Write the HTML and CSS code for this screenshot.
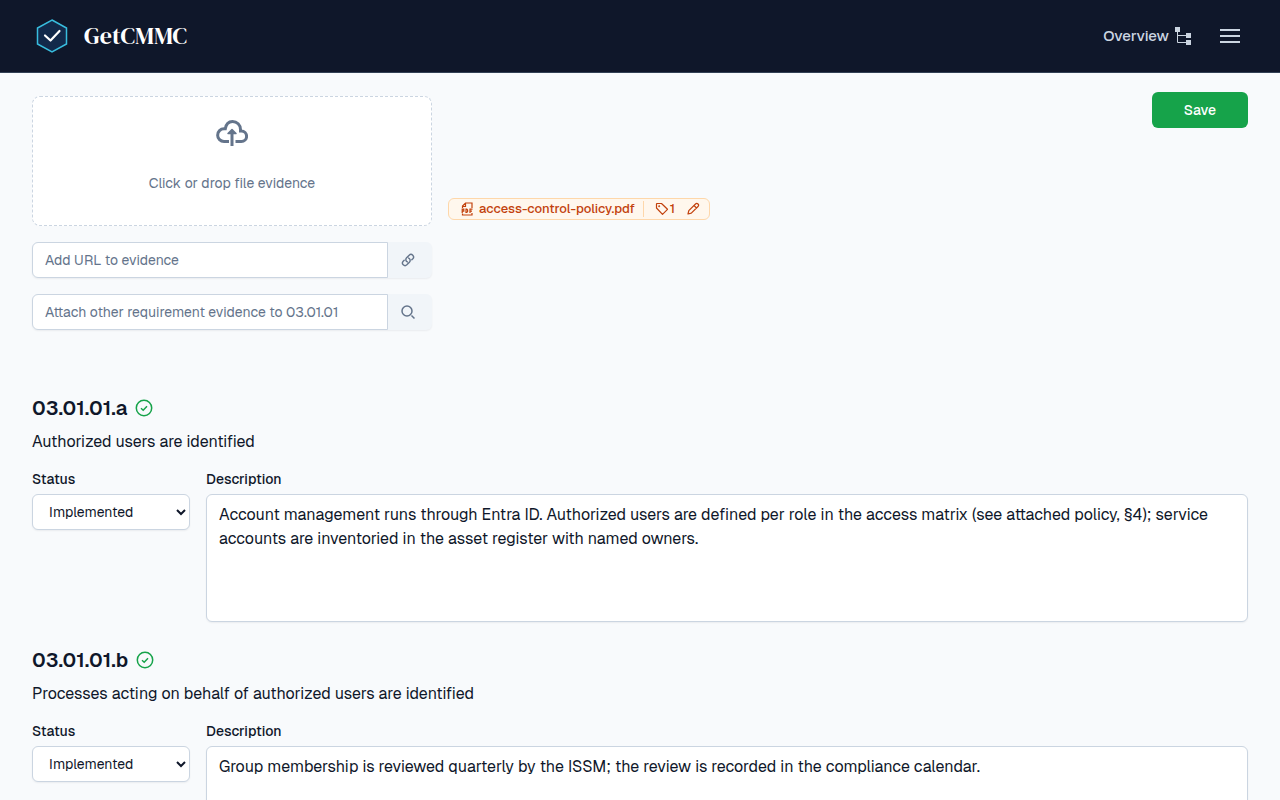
FILE: index.html
```html
<!DOCTYPE html>
<html lang="en">
<head>
    <meta charset="UTF-8">
    <meta name="viewport" content="width=device-width, initial-scale=1.0">
    <title>03.01.01 - GetCMMC</title>
    <link rel="stylesheet" href="styles.css">
</head>
<body>
    <header class="site-header">
        <a href="#" class="brand">
            <svg class="brand-logo" viewBox="0 0 40 40" fill="none">
                <path d="M20 4 34.500 12v16L20 36 5.500 28V12Z" fill="#12294a" stroke="#38bdde" stroke-width="1.500"/>
                <path d="m13 19.500 5.500 5 9-9.500" stroke="#fff" stroke-width="2.200" stroke-linecap="round" stroke-linejoin="round"/>
            </svg>
            <span class="brand-name">GetCMMC</span>
        </a>
        <nav class="site-nav">
            <a href="#" class="overview-link">
                Overview
                <svg width="18" height="20" viewBox="0 0 18 20" fill="none">
                    <path d="M1 1h5v5H1zM12 7h5v5h-5zM12 14h5v5h-5z" fill="currentColor"/>
                    <path d="M3.500 6v10.500H12M3.500 9.500H12" stroke="currentColor"/>
                </svg>
            </a>
            <button type="button" class="menu-btn" aria-label="Menu">
                <svg width="20" height="14" viewBox="0 0 20 14"><path d="M0 0h20v2H0zM0 6h20v2H0zM0 12h20v2H0z" fill="currentColor"/></svg>
            </button>
        </nav>
    </header>

    <main>
        <form>
            <div class="top-row">
                <div class="evidence">
                    <div class="evidence-inputs">
                        <button type="button" class="dropzone">
                            <svg width="32" height="28" viewBox="0 0 32 28" fill="none" stroke="currentColor" stroke-width="3">
                                <path d="M13 22.500H8a6.300 6.300 0 0 1 0-12.700h1.300C10 5.500 12.500 2.500 16.500 2.500c4.500 0 8 3.500 8 8v1.400h.8a5.200 5.200 0 0 1 0 10.600H19.500"/>
                                <path d="M16 27V12"/>
                                <path d="M12 14.500 16 10.500l4 4Z" fill="currentColor" stroke-width="1.500" stroke-linejoin="round"/>
                            </svg>
                            <span>Click or drop file evidence</span>
                        </button>
                        <div class="input-group">
                            <input type="text" placeholder="Add URL to evidence" aria-label="Add URL to evidence">
                            <button type="button" aria-label="Add URL">
                                <svg width="16" height="16" viewBox="-2 -2 28 28" fill="none" stroke="currentColor" stroke-width="2.500" stroke-linecap="round" stroke-linejoin="round">
                                    <path d="M13.190 8.690a4.500 4.500 0 0 1 1.240 7.240l-4.500 4.500a4.500 4.500 0 0 1-6.360-6.360l1.750-1.760m13.360-.62 1.750-1.760a4.500 4.500 0 0 0-6.360-6.360l-4.500 4.500a4.500 4.500 0 0 0 1.240 7.240"/>
                                </svg>
                            </button>
                        </div>
                        <div class="input-group">
                            <input type="text" placeholder="Attach other requirement evidence to 03.01.01" aria-label="Attach other requirement evidence to 03.01.01">
                            <button type="button" aria-label="Search">
                                <svg width="16" height="16" viewBox="0 0 16 16" fill="none" stroke="currentColor" stroke-width="1.500">
                                    <circle cx="7" cy="7" r="5"/>
                                    <path d="m11.500 11.500 3 3"/>
                                </svg>
                            </button>
                        </div>
                    </div>
                    <div class="file-chip">
                        <a href="#" class="file-link">
                            <svg width="14" height="14" viewBox="0 0 14 14" fill="none" stroke="currentColor" stroke-width="1.200">
                                <path d="M2.500 6V4l3-3h6.500v5M2.500 4.500h3V1M2.500 11.500V13H12v-2"/>
                                <path d="M2.200 11V7.200h1.600v2H2.200M6 7.200v3.200h.8l.8-.8V8l-.8-.8ZM10 11V7.200h2.500M10 9.200h2"/>
                            </svg>
                            access-control-policy.pdf
                        </a>
                        <button type="button" class="chip-btn">
                            <svg width="14" height="14" viewBox="0 0 14 14" fill="none" stroke="currentColor" stroke-width="1.200" stroke-linejoin="round">
                                <path d="M1.500 2v4l6 6.300 5-5-6-5.800H2Z"/>
                                <circle cx="4.200" cy="4.200" r=".4"/>
                            </svg>
                            1
                        </button>
                        <button type="button" class="chip-btn" aria-label="Edit">
                            <svg width="14" height="14" viewBox="0 0 14 14" fill="none" stroke="currentColor" stroke-width="1.200" stroke-linejoin="round">
                                <path d="m2 12 .8-3.300L9.500 2a1.750 1.750 0 0 1 2.500 2.500l-6.700 6.700ZM8 3.500 10.500 6"/>
                            </svg>
                        </button>
                    </div>
                </div>
                <button type="submit" class="save-btn">Save</button>
            </div>

            <section class="objective">
                <h2>03.01.01.a
                    <svg width="18" height="18" viewBox="0 0 18 18" fill="none" stroke="currentColor" stroke-width="1.500"><circle cx="9" cy="9" r="7.700"/><path d="m6 9.200 2.200 2L12 7.300"/></svg>
                </h2>
                <p>Authorized users are identified</p>
                <div class="fields">
                    <div class="field">
                        <label for="status-a">Status</label>
                        <select id="status-a">
                            <option>Implemented</option>
                            <option>Not implemented</option>
                        </select>
                    </div>
                    <div class="field">
                        <label for="description-a">Description</label>
                        <textarea id="description-a">Account management runs through Entra ID. Authorized users are defined per role in the access matrix (see attached policy, §4); service accounts are inventoried in the asset register with named owners.</textarea>
                    </div>
                </div>
            </section>

            <section class="objective">
                <h2>03.01.01.b
                    <svg width="18" height="18" viewBox="0 0 18 18" fill="none" stroke="currentColor" stroke-width="1.500"><circle cx="9" cy="9" r="7.700"/><path d="m6 9.200 2.200 2L12 7.300"/></svg>
                </h2>
                <p>Processes acting on behalf of authorized users are identified</p>
                <div class="fields">
                    <div class="field">
                        <label for="status-b">Status</label>
                        <select id="status-b">
                            <option>Implemented</option>
                            <option>Not implemented</option>
                        </select>
                    </div>
                    <div class="field">
                        <label for="description-b">Description</label>
                        <textarea id="description-b">Group membership is reviewed quarterly by the ISSM; the review is recorded in the compliance calendar.</textarea>
                    </div>
                </div>
            </section>
        </form>
    </main>
</body>
</html>
```
FILE: styles.css
```css
* {
    box-sizing: border-box;
}

body {
    font-family: Geist, Inter, "Liberation Sans", sans-serif;
    font-size: 16px;
    line-height: 24px;
    color: #0f172a;
    background-color: #f8fafc;
    margin: 0;
}

button, input, select, textarea {
    font: inherit;
    color: inherit;
    margin: 0;
}

button {
    border: none;
    background: none;
    padding: 0;
    cursor: pointer;
}

a {
    color: inherit;
    text-decoration: none;
}

svg {
    display: block;
    flex-shrink: 0;
}

.site-header {
    display: flex;
    align-items: center;
    justify-content: space-between;
    height: 72px;
    padding: 0 32px;
    background-color: #0f172a;
    color: #cbd5e1;
    box-shadow: 0 1px 0 #334155;
}

.brand {
    display: flex;
    align-items: center;
    gap: 12px;
    color: white;
}

.brand-logo {
    width: 40px;
    height: 40px;
}

.brand-name {
    font-family: "DM Serif Display", "Liberation Serif", serif;
    font-size: 24px;
    line-height: 32px;
}

.site-nav {
    display: flex;
    align-items: center;
    gap: 28px;
    padding-right: 8px;
}

.overview-link {
    display: flex;
    align-items: center;
    gap: 5px;
    font-size: 15px;
    font-weight: 500;
}

main {
    padding: 20px 32px;
}

.top-row {
    display: flex;
    justify-content: space-between;
    align-items: flex-start;
}

.evidence {
    display: flex;
    align-items: center;
    gap: 16px;
    padding-top: 4px;
}

.evidence-inputs {
    display: flex;
    flex-direction: column;
    gap: 16px;
    width: 400px;
}

.dropzone {
    display: flex;
    flex-direction: column;
    align-items: center;
    justify-content: center;
    gap: 24px;
    height: 130px;
    padding-bottom: 8px;
    border: 1px dashed #cbd5e1;
    border-radius: 8px;
    background-color: white;
    color: #64748b;
    font-size: 14px;
}

.input-group {
    display: flex;
    height: 36px;
    border-radius: 6px;
    background-color: #f1f5f9;
    box-shadow: 0 1px 2px rgba(15, 23, 42, 0.06);
    color: #64748b;
}

.input-group input {
    flex: 1;
    min-width: 0;
    padding: 0 12px;
    border: 1px solid #cbd5e1;
    border-radius: 6px 0 0 6px;
    background-color: white;
    font-size: 14px;
}

.input-group input::placeholder {
    color: #64748b;
}

.input-group button {
    padding: 0 16px 0 12px;
    width: 44px;
}

.file-chip {
    display: flex;
    align-items: center;
    height: 22px;
    margin-bottom: 8px;
    padding: 0 9px 0 11px;
    border: 1px solid #fed7aa;
    border-radius: 6px;
    background-color: #fff7ed;
    color: #c2410c;
    font-size: 13px;
    font-weight: 500;
    line-height: 16px;
}

.file-link {
    display: flex;
    align-items: center;
    gap: 5px;
    padding-right: 8px;
    border-right: 1px solid #fed7aa;
}

.chip-btn {
    display: flex;
    align-items: center;
    gap: 1px;
    margin-left: 11px;
}

.save-btn {
    width: 96px;
    height: 36px;
    border-radius: 6px;
    background-color: #16a34a;
    color: white;
    font-size: 14px;
    font-weight: 500;
}

.save-btn:hover {
    background-color: #15803d;
}

.objective {
    margin-bottom: 24px;
}

.top-row + .objective {
    margin-top: 64px;
}

.objective h2 {
    display: flex;
    align-items: center;
    gap: 8px;
    margin: 0 0 8px;
    font-size: 20px;
    font-weight: 600;
    line-height: 28px;
}

.objective h2 svg {
    color: #16a34a;
}

.objective p {
    margin: 0 0 16px;
}

.fields {
    display: grid;
    grid-template-columns: 158px 1fr;
    gap: 16px;
}

.field {
    display: flex;
    flex-direction: column;
    gap: 6px;
}

.field label {
    font-size: 14px;
    font-weight: 500;
    line-height: 18px;
}

.field select, .field textarea {
    border: 1px solid #cbd5e1;
    border-radius: 6px;
    background-color: white;
    box-shadow: 0 1px 2px rgba(15, 23, 42, 0.06);
}

.field select {
    height: 36px;
    padding: 0 0 0 12px;
    font-size: 14px;
}

.field textarea {
    height: 128px;
    padding: 8px 12px;
    resize: none;
}
```
